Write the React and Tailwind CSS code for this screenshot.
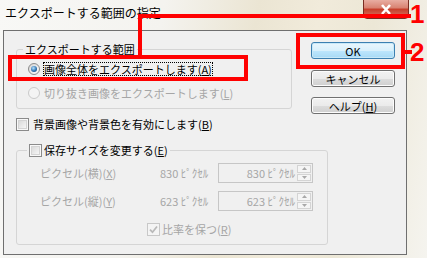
const jp = "font-['Noto_Sans_CJK_JP',sans-serif]";

function Radio({ checked, disabled }) {
  return (
    <span className={`flex h-[12px] w-[12px] shrink-0 items-center justify-center rounded-full border ${disabled ? "border-[#cacaca] bg-[#f4f4f4]" : "border-[#8b8b8b] bg-[linear-gradient(135deg,#d4d4d4,#ffffff)]"}`}>
      {checked && <span className="h-[6px] w-[6px] rounded-full bg-[radial-gradient(circle_at_40%_35%,#b8e2fb,#2f74b4_55%,#123a60)]" />}
    </span>
  );
}

function Check({ checked, disabled }) {
  return (
    <span className={`flex h-[13px] w-[13px] shrink-0 items-center justify-center border ${disabled ? "border-[#c8c8c8] bg-[#f4f4f4]" : "border-[#8b8b8b] bg-[#f8f8f8]"}`}>
      {checked ? (
        <svg width="9" height="9" viewBox="0 0 9 9">
          <path d="M1 4.6 L3.5 7.2 L8 1.4" fill="none" stroke="#b9b9b9" strokeWidth="1.7" />
        </svg>
      ) : (
        <span className="h-[9px] w-[9px] border border-[#d4d4d4] bg-[linear-gradient(135deg,#dadada,#f6f6f6)]" />
      )}
    </span>
  );
}

function Spin({ value }) {
  return (
    <div className="flex h-[20px] w-[95px] border border-[#c6c6c6] bg-[#f0f0f0] p-[1px]">
      <span className="flex-1 pr-[2px] text-right leading-[16px]">{value}</span>
      <div className="flex w-[14px] flex-col gap-[1px]">
        <span className="flex flex-1 items-center justify-center border border-[#d4d4d4] bg-[#f5f5f5]">
          <svg width="5" height="3" viewBox="0 0 5 3"><path d="M0 3 L2.5 0 L5 3Z" fill="#a8a8a8" /></svg>
        </span>
        <span className="flex flex-1 items-center justify-center border border-[#d4d4d4] bg-[#f5f5f5]">
          <svg width="5" height="3" viewBox="0 0 5 3"><path d="M0 0 L2.5 3 L5 0Z" fill="#a8a8a8" /></svg>
        </span>
      </div>
    </div>
  );
}

function Button({ children, focused }) {
  return (
    <button className={`flex h-[17px] w-[84px] items-center justify-center rounded-[3px] border text-[11px] leading-[14px] text-black ${focused ? "border-[#3c7fb1] bg-[linear-gradient(#eaf6fd,#d9f0fc_50%,#bee6fd_51%,#a7d9f5)] shadow-[inset_0_0_0_1px_#c8e8f8]" : "border-[#707070] bg-[linear-gradient(#f2f2f2,#ebebeb_50%,#dddddd_51%,#cfcfcf)] shadow-[inset_0_0_0_1px_#fcfcfc]"}`}>
      {children}
    </button>
  );
}

export default function App() {
  return (
    <div className={`relative h-[258px] w-[427px] overflow-hidden bg-[linear-gradient(100deg,#f8f8f6_0%,#f4f3ef_35%,#ebe5d3_55%,#f1ebdb_68%,#ece7d6_80%,#f5f4ef_100%)] text-[11px] text-black ${jp}`}>
      <div className="h-[30px] pl-[5px] pt-[5px] text-[12px] leading-[16px]">エクスポートする範囲の指定</div>

      <div className="ml-[3px] h-[225px] w-[404px] border border-[#6f6f6f] bg-[#f0f0f0] pl-[12px] pt-[11px]">
        <div className="flex">
          <div className="w-[276px]">
            <fieldset className="h-[67px] rounded-[3px] border border-[#d5d5d5]">
              <legend className="ml-[6px] px-[2px] leading-[14px]">エクスポートする範囲</legend>
              <div className="flex flex-col pl-[11px] pt-[6px]">
                <div className="flex h-[14px] items-center">
                  <Radio checked />
                  <span className="ml-[3px] border border-dotted border-black leading-[12px]">画像全体をエクスポートします(<u>A</u>)</span>
                </div>
                <div className="mt-[10px] flex h-[14px] items-center text-[#a6a6a6]">
                  <Radio disabled />
                  <span className="ml-[4px] leading-[14px]">切り抜き画像をエクスポートします(<u>L</u>)</span>
                </div>
              </div>
            </fieldset>
            <div className="mt-[8px] flex h-[14px] items-center">
              <Check />
              <span className="ml-[4px] leading-[14px]">背景画像や背景色を有効にします(<u>B</u>)</span>
            </div>
          </div>

          <div className="ml-[19px] flex flex-col">
            <Button focused>OK</Button>
            <div className="mt-[11px]">
              <Button>キャンセル</Button>
            </div>
            <div className="mt-[10px]">
              <Button>ヘルプ(<u>H</u>)</Button>
            </div>
          </div>
        </div>

        <fieldset className="mt-[12px] h-[102px] w-[312px] rounded-[3px] border border-[#d5d5d5]">
          <legend className="ml-[10px] px-[2px]">
            <div className="flex h-[14px] items-center">
              <Check />
              <span className="ml-[2px] leading-[14px]">保存サイズを変更する(<u>E</u>)</span>
            </div>
          </legend>
          <div className="flex flex-col pt-[6px] text-[#a6a6a6]">
            <div className="flex h-[20px] items-center pl-[23px]">
              <span className="w-[120px] leading-[14px]">ピクセル(横)(<u>X</u>)</span>
              <span className="w-[58px] leading-[14px]">830 ﾋﾟｸｾﾙ</span>
              <Spin value="830 ﾋﾟｸｾﾙ" />
            </div>
            <div className="mt-[8px] flex h-[20px] items-center pl-[23px]">
              <span className="w-[120px] leading-[14px]">ピクセル(縦)(<u>Y</u>)</span>
              <span className="w-[58px] leading-[14px]">623 ﾋﾟｸｾﾙ</span>
              <Spin value="623 ﾋﾟｸｾﾙ" />
            </div>
            <div className="mt-[11px] flex h-[14px] items-center pl-[130px]">
              <Check checked disabled />
              <span className="ml-[2px] leading-[14px]">比率を保つ(<u>R</u>)</span>
            </div>
          </div>
        </fieldset>
      </div>

      {/* close button */}
      <div className="absolute left-[363px] top-[-2px] flex h-[21px] w-[46px] items-center justify-center rounded-b-[4px] border border-[#7a2d22] bg-[linear-gradient(#eab3a8,#d98473_45%,#c6402c_55%,#d87766)]">
        <svg width="12" height="11" viewBox="0 0 12 11" className="mt-[2px]">
          <path d="M2 1 L10 10 M10 1 L2 10" stroke="#ffffff" strokeWidth="2.6" />
        </svg>
      </div>

      {/* annotations */}
      <div className="absolute left-[8px] top-[55px] h-[26px] w-[240px] border-[4px] border-[#ff0000]" />
      <div className="absolute left-[138px] top-[14px] h-[42px] w-[4px] bg-[#ff0000]" />
      <div className="absolute left-[138px] top-[14px] h-[4px] w-[273px] bg-[#ff0000]" />
      <div className="absolute left-[410px] top-[3px] font-['Liberation_Sans',sans-serif] text-[26px] font-bold leading-[22px] text-[#ff0000]">1</div>
      <div className="absolute left-[296px] top-[33px] h-[36px] w-[109px] border-[4px] border-[#ff0000]" />
      <div className="absolute left-[404px] top-[50px] h-[4px] w-[8px] bg-[#ff0000]" />
      <div className="absolute left-[410px] top-[41px] font-['Liberation_Sans',sans-serif] text-[26px] font-bold leading-[22px] text-[#ff0000]">2</div>
    </div>
  );
}
